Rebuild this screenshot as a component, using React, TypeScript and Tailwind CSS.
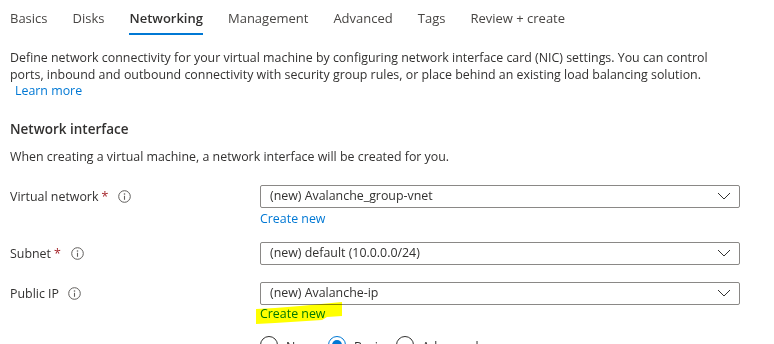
import React from 'react'

const InfoIcon = () => (
  <svg width="13" height="13" viewBox="0 0 13 13" className="text-[#605e5c]">
    <circle cx="6.5" cy="6.5" r="5.8" fill="none" stroke="currentColor" strokeWidth="1" />
    <circle cx="6.5" cy="4" r="0.8" fill="currentColor" />
    <path d="M6.5 5.8v4" stroke="currentColor" strokeWidth="1.1" />
  </svg>
)

const Chevron = () => (
  <svg width="14" height="8" viewBox="0 0 14 8" className="text-[#323130]">
    <path d="M1 1l6 6 6-6" fill="none" stroke="currentColor" strokeWidth="1" />
  </svg>
)

const Dropdown = ({ value }: { value: string }) => (
  <div className="h-[23px] w-[480px] border border-[#8a8886] rounded-[2px] flex items-center justify-between pl-[9px] pr-[8px]">
    <span>{value}</span>
    <Chevron />
  </div>
)

const FieldLabel = ({ text, required }: { text: string; required?: boolean }) => (
  <div className="w-[250px] flex items-center pt-[2px]">
    <span>{text}</span>
    {required && <span className="text-[#a4262c] ml-[3px]">*</span>}
    <span className={required ? 'ml-[10px] flex' : 'ml-[9px] flex'}>
      <InfoIcon />
    </span>
  </div>
)

const tabs = ['Basics', 'Disks', 'Networking', 'Management', 'Advanced', 'Tags', 'Review + create']

export default function App() {
  return (
    <div className="w-[774px] h-[344px] overflow-hidden bg-white text-[#323130] text-[12.4px] font-['Open_Sans',sans-serif]">
      {/* TABS */}
      <div className="flex gap-[25px] px-[10px]">
        {tabs.map(t => (
          <div
            key={t}
            className={
              t === 'Networking'
                ? 'h-[35px] pt-[5px] flex items-center border-b-2 border-[#0078d4] text-[13px] font-semibold text-[#323130]'
                : 'h-[35px] pt-[5px] flex items-center border-b-2 border-transparent text-[13px] text-[#484644]'
            }
          >
            {t}
          </div>
        ))}
      </div>

      {/* DESCRIPTION */}
      <p className="mt-[15px] px-[10px] leading-[16.5px]">
        Define network connectivity for your virtual machine by configuring network interface card (NIC) settings. You can control
        <br />
        ports, inbound and outbound connectivity with security group rules, or place behind an existing load balancing solution.
        <br />
        <span className="ml-[5px] text-[#0078d4]">Learn more</span>
      </p>

      <h2 className="mt-[19px] px-[10px] text-[13.5px] leading-[20px] font-semibold">Network interface</h2>
      <p className="mt-[9px] px-[10px] leading-[17px]">When creating a virtual machine, a network interface will be created for you.</p>

      {/* FIELDS */}
      <div className="px-[10px] mt-[20px] flex flex-col">
        <div className="flex items-center">
          <FieldLabel text="Virtual network" required />
          <Dropdown value="(new) Avalanche_group-vnet" />
        </div>
        <div className="pl-[250px] mt-[3px] leading-[16px] text-[#0078d4]">Create new</div>

        <div className="flex items-center mt-[15px]">
          <FieldLabel text="Subnet" required />
          <Dropdown value="(new) default (10.0.0.0/24)" />
        </div>

        <div className="flex items-center mt-[17px]">
          <FieldLabel text="Public IP" />
          <Dropdown value="(new) Avalanche-ip" />
        </div>
        <div className="pl-[250px] mt-[1px] leading-[16px]">
          <span className="relative inline-block text-[#0078d4]">
            Create new
            <svg
              width="92"
              height="26"
              viewBox="0 0 92 26"
              className="absolute left-[-5px] top-[-5px] mix-blend-multiply pointer-events-none"
            >
              <path d="M1 8 L20 7 L45 5 L87 1 L87 15 L72 16 L67 19 L20 22 L1 23 Z" fill="#ffff00" />
            </svg>
          </span>
        </div>

        <div className="flex items-start mt-[12px]">
          <div className="w-[250px] flex items-center pt-[9px]">
            <span>NIC network security group</span>
            <span className="ml-[9px] flex">
              <InfoIcon />
            </span>
          </div>
          <div className="flex items-center">
            {['None', 'Basic', 'Advanced'].map(o => (
              <label key={o} className="w-[68px] flex items-center gap-[8px]">
                <span
                  className={
                    o === 'Basic'
                      ? 'w-[18px] h-[18px] shrink-0 rounded-full border border-[#0078d4] flex items-center justify-center'
                      : 'w-[18px] h-[18px] shrink-0 rounded-full border border-[#323130]'
                  }
                >
                  {o === 'Basic' && <span className="w-[10px] h-[10px] rounded-full bg-[#0078d4]" />}
                </span>
                <span className="pt-[4px]">{o}</span>
              </label>
            ))}
          </div>
        </div>
      </div>
    </div>
  )
}
